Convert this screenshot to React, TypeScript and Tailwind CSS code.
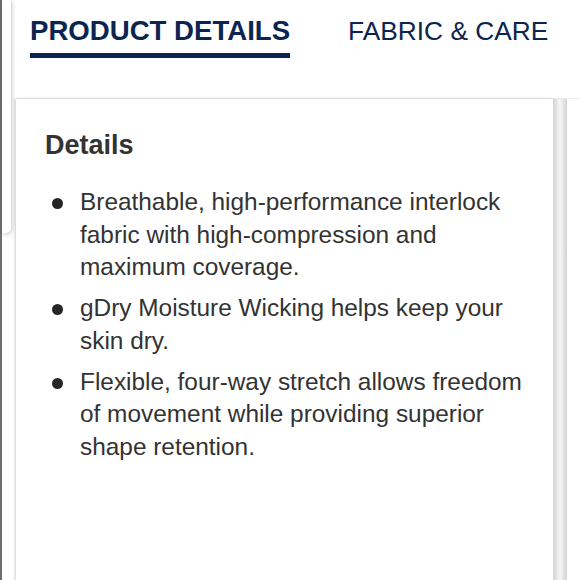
import React from 'react';

const bullets = [
  'Breathable, high-performance interlock fabric with high-compression and maximum coverage.',
  'gDry Moisture Wicking helps keep your skin dry.',
  'Flexible, four-way stretch allows freedom of movement while providing superior shape retention.',
];

export default function App() {
  return (
    <div
      className="flex h-[580px] w-[580px] overflow-hidden bg-white"
      style={{ fontFamily: '"Liberation Sans", Arial, sans-serif' }}
    >
      {/* left edge of the previous panel */}
      <div className="w-[2px] shrink-0 bg-[#6f6f6f]" />
      <div className="h-[233px] w-[9px] shrink-0 rounded-br-[5px] bg-white shadow-[1px_1px_4px_rgba(0,0,0,0.22)]" />

      <div className="flex min-w-0 flex-1 flex-col pl-[5px]">
        {/* Tabs */}
        <div className="flex h-[98px] items-start pl-[14px] pt-[14px]">
          <div className="flex flex-col">
            <span className="text-[27.6px] font-bold leading-[34px] text-[#0c2450]">
              PRODUCT DETAILS
            </span>
            <span className="mt-[5px] h-[5px] w-full bg-[#0c2450]" />
          </div>
          <span className="ml-[58px] text-[26.3px] leading-[34px] text-[#0c2450]">
            FABRIC &amp; CARE
          </span>
        </div>

        {/* Cards row */}
        <div className="flex flex-1 border-t border-[#ececec]">
          <div className="w-[537px] shrink-0 bg-white pl-[29px] pt-[30px] shadow-[-1px_0_3px_rgba(0,0,0,0.2)]">
            <h2 className="text-[27px] font-bold leading-[32px] text-[#333333]">Details</h2>
            <ul className="mt-[25px] flex w-[490px] flex-col gap-[8.5px]">
              {bullets.map((b) => (
                <li key={b} className="flex items-start">
                  <span className="mt-[12px] ml-[7px] mr-[17px] h-[11px] w-[11px] shrink-0 rounded-full bg-[#262626]" />
                  <span className="text-[24.4px] leading-[32.5px] text-[#333333]">{b}</span>
                </li>
              ))}
            </ul>
          </div>
          <div className="w-[14px] shrink-0 bg-gradient-to-r from-[#d2d2d2] via-[#f6f6f6] to-[#d2d2d2]" />
          <div className="flex-1 bg-white" />
        </div>
      </div>
    </div>
  );
}
